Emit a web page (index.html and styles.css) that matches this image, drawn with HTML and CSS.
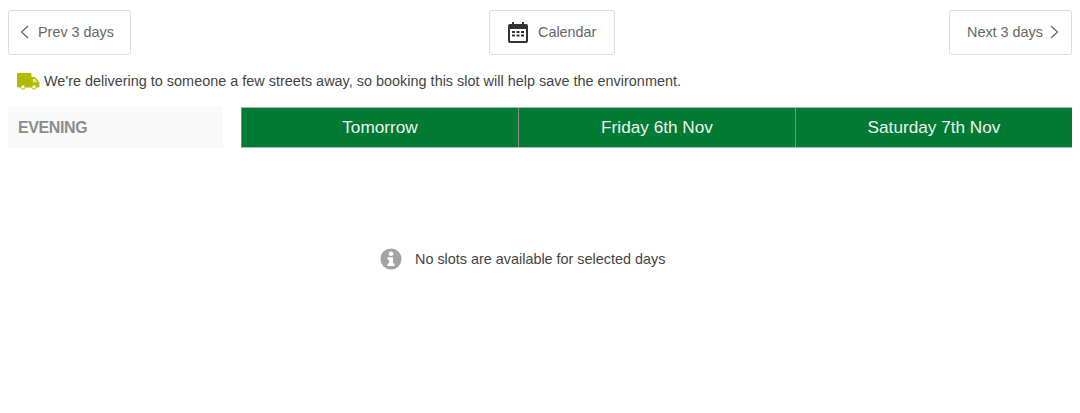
FILE: index.html
```html
<!DOCTYPE html>
<html lang="en">
<head>
<meta charset="utf-8">
<title>Delivery slots</title>
<link rel="stylesheet" href="styles.css">
</head>
<body>
<div class="page">
  <nav class="nav">
    <button class="btn btn-prev">
      <svg class="chev" width="9" height="14" viewBox="0 0 9 14"><path d="M8 1 1.500 7 8 13" fill="none" stroke="#666" stroke-width="1.2"/></svg>
      <span>Prev 3 days</span>
    </button>
    <button class="btn btn-cal">
      <svg width="20" height="22" viewBox="0 0 20 22"><path fill="#333" d="M4 1h2v2h8V1h2v2h2a2 2 0 0 1 2 2v15a2 2 0 0 1-2 2H2a2 2 0 0 1-2-2V5a2 2 0 0 1 2-2h2z"/><rect x="2" y="8" width="16" height="12" fill="#fff"/><path fill="#333" d="M4 10h3v2H4zM8.500 10h3v2h-3zM13 10h3v2h-3zM4 13.500h3v2H4zM8.500 13.500h3v2h-3zM13 13.500h3v2h-3z"/></svg>
      <span>Calendar</span>
    </button>
    <button class="btn btn-next">
      <span>Next 3 days</span>
      <svg class="chev" width="9" height="14" viewBox="0 0 9 14"><path d="M1 1l6.500 6L1 13" fill="none" stroke="#666" stroke-width="1.2"/></svg>
    </button>
  </nav>
  <p class="eco">
    <svg width="23" height="18" viewBox="0 0 23 18"><path fill="#b2bb00" d="M1.500 1H13a1.500 1.500 0 0 1 1.500 1.500V5H18l4.500 5.500v3.500a1.500 1.500 0 0 1-1.500 1.500H1.500A1.500 1.500 0 0 1 0 14V2.500A1.500 1.500 0 0 1 1.500 1z"/><path fill="#e4e8a0" d="M16 6.500h1.500l3 3.800H16z"/><circle cx="6" cy="15" r="2.200" fill="#fff" stroke="#b2bb00" stroke-width="1"/><circle cx="17" cy="15" r="2.200" fill="#fff" stroke="#b2bb00" stroke-width="1"/></svg>
    <span>We're delivering to someone a few streets away, so booking this slot will help save the environment.</span>
  </p>
  <div class="slots-head">
    <div class="period">EVENING</div>
    <div class="days">
      <div class="day">Tomorrow</div>
      <div class="day">Friday 6th Nov</div>
      <div class="day">Saturday 7th Nov</div>
    </div>
  </div>
  <div class="empty">
    <svg width="22" height="22" viewBox="0 0 22 22"><circle cx="11" cy="11" r="10.500" fill="#a3a3a3"/><circle cx="11" cy="5.800" r="2.300" fill="#fff"/><path fill="#fff" d="M7.500 9.200h5.500v6.300h1.500v2.500h-7v-2.500H9v-3.800H7.500z"/></svg>
    <span>No slots are available for selected days</span>
  </div>
</div>
</body>
</html>
```
FILE: styles.css
```css
* { box-sizing: border-box; }
html, body { margin: 0; height: 100%; background: #fff; }
body { font-family: "Liberation Sans", Arial, sans-serif; color: #444; overflow: hidden; }
.page { padding: 10px 8px 0; }
.nav { display: flex; justify-content: space-between; align-items: flex-start; }
.btn {
  display: flex; align-items: center; height: 45px; padding: 0 0 1px;
  background: #fff; border: 1px solid #ddd; border-radius: 3px;
  font: 14.4px "Liberation Sans", Arial, sans-serif; color: #666;
}
.btn-prev { width: 123px; padding-left: 11px; gap: 9px; }
.btn-cal { width: 126px; margin-left: 24px; padding-left: 18px; gap: 10px; }
.btn-next { width: 123px; padding-left: 17px; gap: 7px; }
.eco { display: flex; align-items: center; gap: 4px; margin: 17px 0 0 9px; height: 18px; font-size: 14.45px; color: #444; }
.slots-head { display: flex; margin-top: 17px; height: 41px; }
.period {
  width: 215px; margin-right: 18px; padding-left: 10px;
  display: flex; align-items: center;
  background: #f9f9f9; color: #8c8c8c; font-size: 16px; letter-spacing: -0.4px; font-weight: 700;
}
.days { flex: 1; display: flex; background: #017a33; border-style: solid; border-width: 1px 0 1px 1px; border-color: #a9bdb0 #888; }
.day {
  flex: 1; display: flex; align-items: center; justify-content: center;
  color: #eef4ef; font-size: 17.2px; border-left: 1px solid #888;
}
.day:first-child { border-left: 0; }
.empty { display: flex; align-items: center; gap: 13px; margin: 100px 0 0 372px; font-size: 14.4px; color: #444; }
```
